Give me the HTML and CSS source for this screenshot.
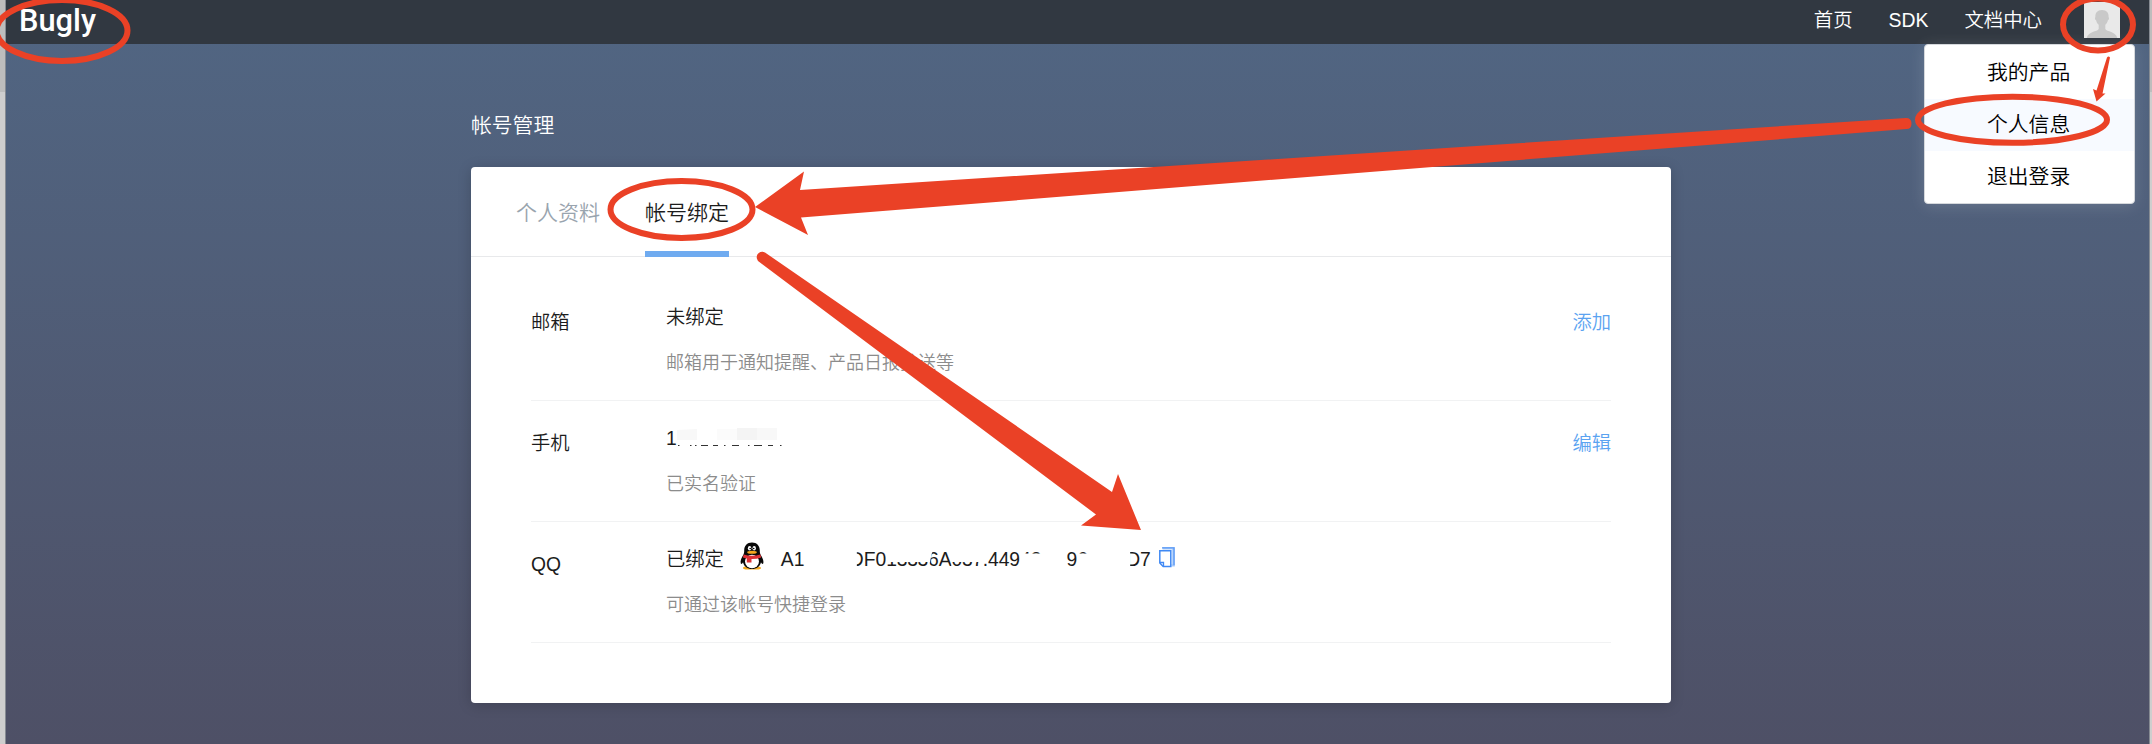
FILE: index.html
```html
<!DOCTYPE html>
<html lang="zh-CN">
<head>
<meta charset="utf-8">
<title>Bugly</title>
<link rel="stylesheet" href="styles.css">
</head>
<body>
<div class="page">
  <header class="topbar">
    <div class="logo">Bugly</div>
    <nav class="nav">
      <a class="nav-link">首页</a>
      <a class="nav-link">SDK</a>
      <a class="nav-link">文档中心</a>
      <div class="avatar">
        <svg viewBox="0 0 36 36" width="36" height="36"><rect width="36" height="36" fill="#e9e9e9"/><path d="M18 8c-4.600 0-7 3-6.600 7.200-.8.3-.5 2.600.7 3 .5 2.200 1.400 3.500 2.600 4.600v4.200c-1.500 2.800-10.500 2.500-12 9h30.600c-1.500-6.500-10.500-6.200-12-9v-4.200c1.200-1.100 2.100-2.400 2.600-4.600 1.200-.4 1.500-2.700.7-3C25 11 22.600 8 18 8z" fill="#c9c9c9"/></svg>
        <ul class="menu">
          <li class="menu-item">我的产品</li>
          <li class="menu-item active">个人信息</li>
          <li class="menu-item">退出登录</li>
        </ul>
      </div>
    </nav>
  </header>
  <main class="content">
    <h1 class="title">帐号管理</h1>
    <section class="card">
      <div class="tabs">
        <a class="tab">个人资料</a>
        <a class="tab current">帐号绑定</a>
      </div>
      <div class="rows">
        <div class="row">
          <div class="label">邮箱</div>
          <div class="info"><div class="value">未绑定</div><div class="desc">邮箱用于通知提醒、产品日报推送等</div></div>
          <a class="action">添加</a>
        </div>
        <div class="row">
          <div class="label">手机</div>
          <div class="info">
            <div class="value phone">1<svg class="phone-mask" viewBox="0 0 108 22" width="108" height="22"><g fill="#f8f8f8"><path d="M0 2l20-1v11H0z"/><path d="M40 1h20v11H40z" fill="#fbfbfb"/><path d="M60 0h20v12H60z" fill="#f4f4f4"/><path d="M80 0h20v12H80z"/></g><path d="M1 17.500h1.500M13 17.500h1.500M18 17.500h1.500M24 17.500h7M36 17.500h5M47 17.500h1.500M55 17.500h7M71 17.500h1.500M77 17.500h8M91 17.500h5M103 17.500h1.500" stroke="#333" stroke-width="1.200"/></svg></div>
            <div class="desc">已实名验证</div>
          </div>
          <a class="action">编辑</a>
        </div>
        <div class="row">
          <div class="label">QQ</div>
          <div class="info">
            <div class="value">已绑定
              <svg class="penguin" viewBox="0 0 24 28" width="24" height="28"><path d="M3 25.500q4-2.500 8.500.5 5-3 9.500-.5.500 2-4.500 2h-9Q2.500 27.500 3 25.500z" fill="#f4a91f"/><path d="M12 .5C7 .5 4.200 4 4.200 8.500c0 1.800-.2 3-.8 4.200C1.500 15.500 0 19 .8 21.500c.5 1 1.500.2 2.200-1.300C4 24.500 7.500 27 12 27s8-2.500 9-6.800c.7 1.500 1.700 2.300 2.200 1.300.8-2.500-.7-6-2.600-8.800-.6-1.200-.8-2.400-.8-4.200C19.800 4 17 .5 12 .5z" fill="#080808"/><ellipse cx="12" cy="19.500" rx="7" ry="6.800" fill="#fff"/><ellipse cx="9.600" cy="6.300" rx="1.700" ry="2.300" fill="#fff"/><ellipse cx="14.200" cy="6.300" rx="1.700" ry="2.300" fill="#fff"/><circle cx="10.200" cy="6.500" r=".8"/><circle cx="13.700" cy="6.500" r=".8"/><ellipse cx="12" cy="10.200" rx="4.800" ry="1.500" fill="#f5a61d"/><path d="M3.800 12.500q8 2.500 16.600 0l.8 3q-4.500 1.700-9.700 1.600v3.300H6.800v-3.800l-4-1.100z" fill="#dc3036"/></svg>
              <span class="uid">
                <span class="uid-start">A1</span>
                <span class="clip-left">DF0</span><span class="clip-top">1333</span><span class="clip-slant">6A</span><span class="clip-top">037.</span><span class="uid-mid">449</span><span class="clip-bottom">43</span>
                <span class="uid-nine">9</span><span class="clip-bottom tail">6</span><span class="clip-left uid-end">D7</span>
              </span>
              <svg class="copy" viewBox="0 0 16 21" width="16" height="21" fill="none"><path d="M3.500 1.200h11v17h-2" stroke="#a9cbfa" stroke-width="2.600"/><path d="M3 .8h12v17.500" stroke="#5a99f5" stroke-width="1.300"/><path d="M.8 3.700h11v15.800H4.200L.8 16z" stroke="#4089f4" stroke-width="1.500"/><path d="M1 15.500h3.500v4" stroke="#4089f4" stroke-width="1.300"/></svg>
            </div>
            <div class="desc">可通过该帐号快捷登录</div>
          </div>
        </div>
      </div>
    </section>
  </main>
</div>
<svg class="marks" viewBox="0 0 2152 744" width="2152" height="744">
  <g fill="none" stroke="#ea4126" stroke-width="6">
    <ellipse cx="62" cy="30.500" rx="65.500" ry="30.500"/>
    <ellipse cx="2098" cy="24.500" rx="35" ry="26"/>
    <ellipse cx="2012.500" cy="119.700" rx="94.500" ry="23"/>
    <ellipse cx="681.500" cy="209.500" rx="71" ry="28.500"/>
  </g>
  <g fill="#ea4126">
    <path d="M755 207L804 171.500 800 190 1906 118q5.500 0 5.500 5.500t-5 5.500L801 217.500 808 235z"/>
    <path d="M758 261c-4-6 2-11 7-8.500L1112 492 1118 474 1141 530 1081 525.500 1096 514.500z"/>
    <path d="M2107 57.500q1.500-2 3 0L2102.500 93.500 2105.500 93.500 2096.500 101.500 2093 89 2096.500 90.500z"/>
  </g>
</svg>
</body>
</html>
```
FILE: styles.css
```css
* { box-sizing: border-box; }
body {
  margin: 0;
  height: 744px;
  overflow: hidden;
  position: relative;
  background: linear-gradient(#bdbdbd 92px, #cecece 92px);
  font-family: "Liberation Sans", "Noto Sans CJK SC", sans-serif;
  font-weight: 350;
  color: #1c1c1c;
}
.page {
  height: 744px;
  margin: 0 2px 0 5px;
  border: solid #868b92;
  border-width: 0 1px;
  background: linear-gradient(#516683, #4e5066);
}
.topbar {
  height: 44px;
  padding: 0 29px 0 13px;
  display: flex;
  justify-content: space-between;
  background: #313841;
}
.logo { font: 500 30.800px/41px Roboto, sans-serif; color: #fff; }
.nav { display: flex; gap: 36px; color: #fff; font-size: 19.4px; line-height: 40px; }
.avatar { position: relative; width: 36px; margin: 2px 0 0 6px; }
.avatar svg { display: block; }
.menu {
  position: absolute;
  top: 42px;
  right: -15px;
  width: 211px;
  height: 160px;
  margin: 0;
  padding: 2px 0;
  list-style: none;
  background: #fff;
  border: 1px solid #d5d8dc;
  border-radius: 4px;
  box-shadow: 0 2px 16px rgba(255, 255, 255, .14);
  color: #000;
}
.menu-item { height: 52px; padding-left: 62px; font-size: 20.800px; line-height: 52px; }
.menu-item.active { background: #f7faff; }
.content { width: 1200px; margin-left: 465px; }
.title { margin: 0; height: 123px; padding-top: 61px; font-size: 20.800px; line-height: 42px; font-weight: 350; color: #fff; }
.card { height: 536px; background: #fff; border-radius: 4px; box-shadow: 0 2px 14px rgba(0, 0, 0, .18); }
.tabs { display: flex; gap: 45px; height: 90px; padding-left: 45px; border-bottom: 1px solid #e8e9eb; }
.tab { height: 90px; font-size: 21px; line-height: 91px; color: #99a4ae; }
.tab.current { color: #1c1c1c; border-bottom: 6px solid #6fabf0; }
.rows { padding: 23px 60px 0; }
.row { display: flex; height: 121px; border-bottom: 1px solid #f1f2f3; font-size: 19.300px; }
.label { width: 135px; padding-top: 28px; line-height: 30px; }
.info { flex: 1; padding-top: 21px; }
.value { display: flex; align-items: center; height: 30px; white-space: nowrap; }
.value.phone { padding-top: 3px; }
.desc { margin-top: 18px; font-size: 18px; line-height: 28px; color: #8c8c8c; }
.action { padding-top: 28px; line-height: 30px; color: #5ba3f1; }
.penguin { margin: -4px 17px 0 16px; }
.uid { display: flex; width: 370px; line-height: 22px; padding-top: 3px; }
.uid-start { width: 69px; }
.clip-left { clip-path: inset(0 0 0 7px); }
.clip-top { clip-path: inset(13.5px 0 0 0); letter-spacing: -.3px; }
.clip-slant { clip-path: polygon(5px 0, 100% 0, 100% 100%, 0 100%); }
.clip-bottom { clip-path: inset(0 0 17px 0); }
.uid-nine { margin-left: 25px; }
.uid-end { margin-left: auto; clip-path: inset(0 0 0 4px); }
.copy { margin: -2px 0 0 8px; }
.marks { position: absolute; left: 0; top: 0; }
```
